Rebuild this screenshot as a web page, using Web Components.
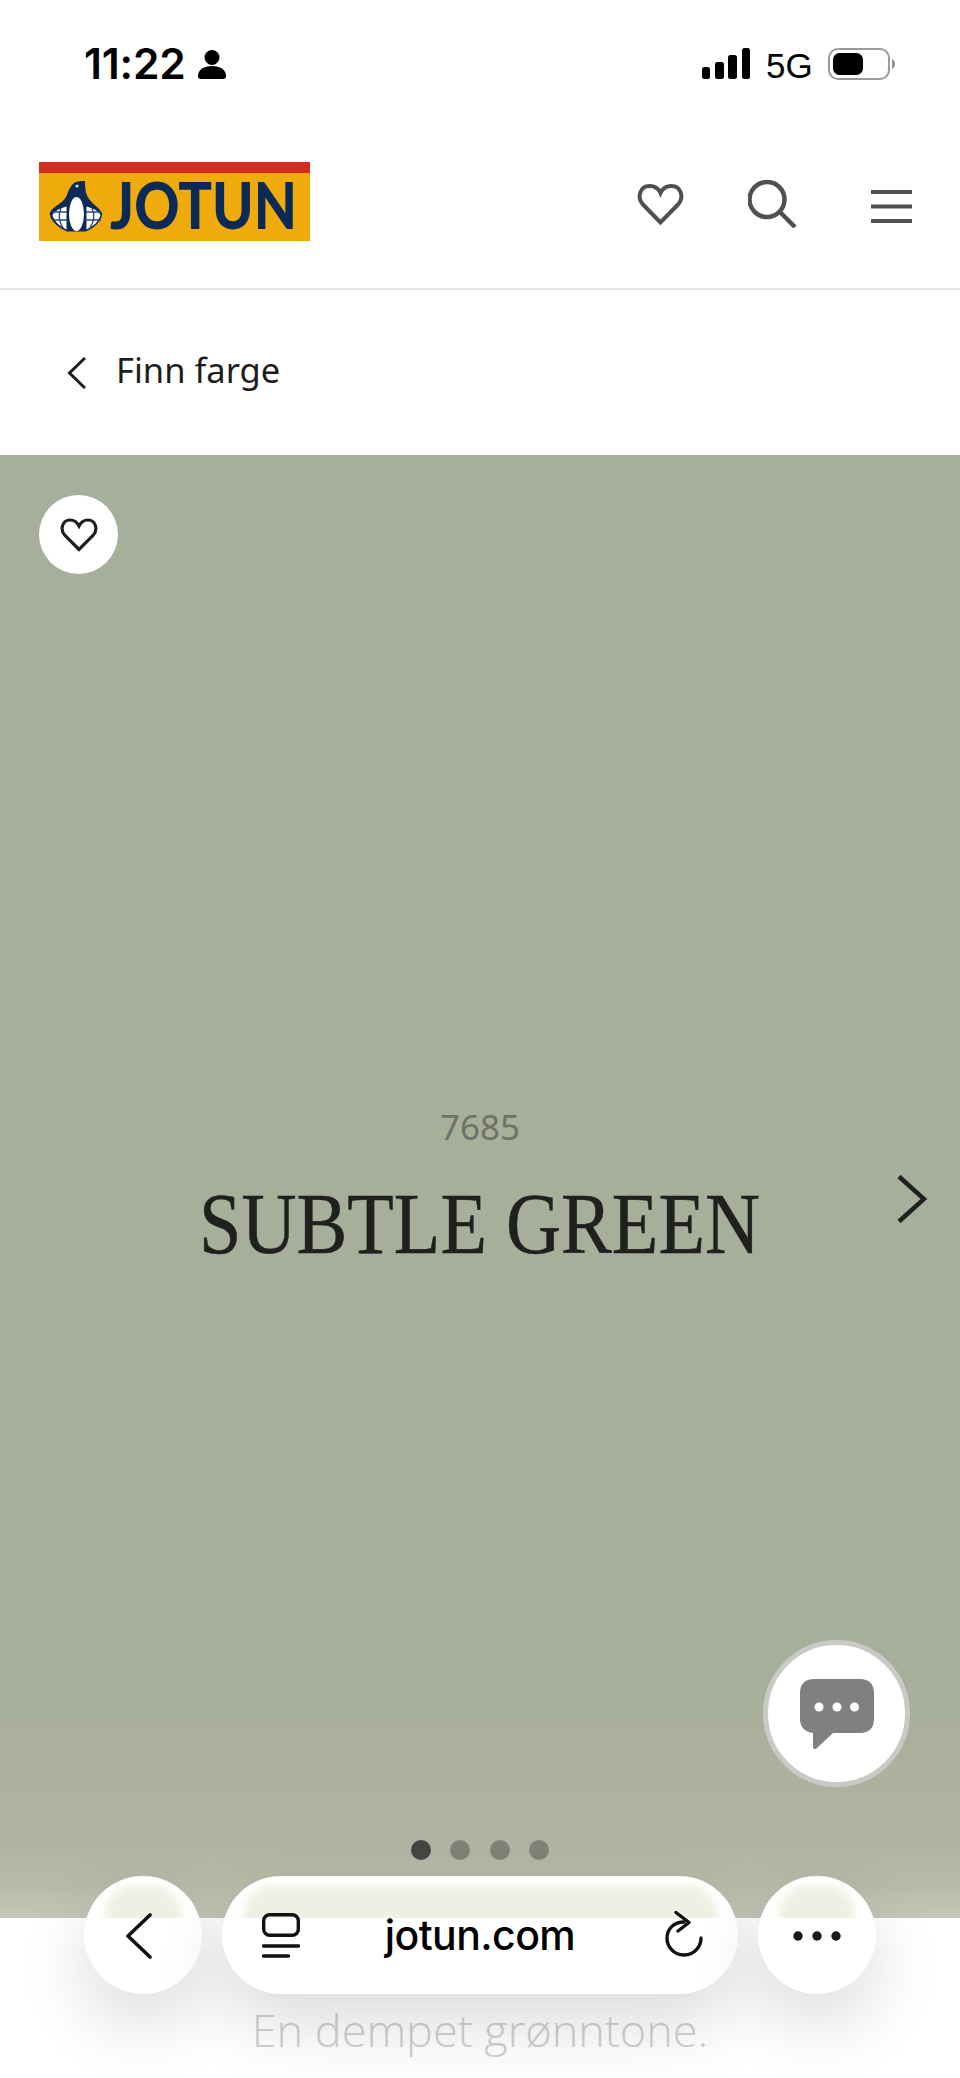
<!DOCTYPE html>
<html lang="no"><head><meta charset="utf-8"><title>Subtle Green</title>
<style>
html,body{margin:0;padding:0;background:#fff}
body{width:960px;height:2078px;overflow:hidden;position:relative;font-family:"Noto Sans","Open Sans",sans-serif}
</style></head><body>
<status-bar></status-bar>
<site-header></site-header>
<back-link>Finn farge</back-link>
<color-hero code="7685" name="SUBTLE GREEN"></color-hero>
<color-note>En dempet grønntone.</color-note>
<chat-fab></chat-fab>
<browser-bar url="jotun.com"></browser-bar>
<script>
function def(name,html){
  customElements.define(name,class extends HTMLElement{
    constructor(){super();this.attachShadow({mode:'open'});}
    connectedCallback(){
      let h=html;
      for(const a of this.getAttributeNames())h=h.split('{{'+a+'}}').join(this.getAttribute(a));
      this.shadowRoot.innerHTML=h;
    }
  });
}
def('status-bar',`<style>
:host{display:flex;height:130px;box-sizing:border-box;padding:0 65px 0 84px;align-items:flex-start;color:#000}
.time{font:600 42.500px/1 Inter,sans-serif;letter-spacing:-.2px;margin-top:43px;width:101px;white-space:nowrap}
.person{margin:50px 0 0 13px}
.sp{flex:1}
.sig{margin-top:48px}
.g{font:400 35px/1 "Liberation Sans",sans-serif;margin:48px 0 0 16px;width:46px}
.bat{margin:48px 0 0 16px}
</style>
<div class="time">11:22</div>
<svg class="person" width="28" height="29" viewBox="0 0 28 29"><circle cx="14" cy="7.500" r="7.500"/><path d="M0 26c0-6.500 6-10 14-10s14 3.500 14 10c0 2-1 3-3 3H3c-2 0-3-1-3-3z"/></svg>
<div class="sp"></div>
<svg class="sig" width="48" height="31" viewBox="0 0 48 31"><rect x="0" y="19" width="8" height="12" rx="2.500"/><rect x="13" y="14" width="9" height="17" rx="2.500"/><rect x="26" y="7" width="9" height="24" rx="2.500"/><rect x="40" y="0" width="8" height="31" rx="2.500"/></svg>
<div class="g">5G</div>
<svg class="bat" width="67" height="32" viewBox="0 0 67 32"><rect x="1" y="1" width="60" height="30" rx="9" fill="none" stroke="#999" stroke-width="2"/><rect x="5" y="5" width="30" height="22" rx="6.500"/><path d="M64 11c2 .8 3 2.800 3 5s-1 4.200-3 5z" fill="#8f8f8f"/></svg>`);

def('jotun-logo',`<style>:host{display:block;width:271px;height:79px}svg{display:block;overflow:visible}</style>
<svg width="271" height="90" viewBox="0 0 271 90">
<rect width="271" height="79" fill="#efaa0b"/><rect width="271" height="11" fill="#d92c20"/>
<path d="M46 19C41 19 37 19 34 22 30 26 29 31 27 35 25 39 20 42 16 45 12 48 10 51 11 53 12 60 20 66 28 69.500L47 69.500C55 66 62 60 63 53 64 51 61 48 58 45 53 41 49 37 47 31 46 26 46 22 46 19Z" fill="#0c2a58"/>
<path d="M13.500 53C16 49 21 46 27.500 44.500L27.500 67.500C20 64 15 59 13.500 53Z" fill="#fff"/>
<path d="M61.500 53C59 49 54 46 47.500 44.500L47.500 67.500C55 64 60 59 61.500 53Z" fill="#fff"/>
<g stroke="#2f4872" stroke-width="1.400" fill="none"><path d="M13 50h15M13 58h15M47 50h15M47 58h15M22 46c-3 7-2 14 2 20M53 46c3 7 2 14-2 20"/></g>
<ellipse cx="37.500" cy="52" rx="7.500" ry="17" fill="#fff"/>
<circle cx="38" cy="24" r="1.600" fill="#cfd8e6"/>
<text x="71" y="67" font-family="Lato,sans-serif" font-weight="900" font-size="64" fill="#0c2a58" textLength="187" lengthAdjust="spacingAndGlyphs">JOTUN</text>
</svg>`);

def('site-header',`<style>
:host{display:flex;height:160px;box-sizing:border-box;padding:32px 48px 0 39px;border-bottom:2px solid #e6e6e6;align-items:flex-start}
.sp{flex:1}svg{display:block;fill:none;stroke:#505050}
</style>
<jotun-logo></jotun-logo><div class="sp"></div>
<svg style="margin-top:21px" width="47" height="43" viewBox="0 0 47 43"><path d="M23.500 39.500 6 21.500C-.5 14.500 3 3 12.500 3c5 0 9 2.500 11 7 2-4.500 6-7 11-7C44 3 47.500 14.500 41 21.500z" stroke-width="4" stroke-linejoin="miter"/></svg>
<svg style="margin:18px 0 0 64px" width="49" height="48" viewBox="0 0 49 48"><circle cx="19" cy="19.500" r="17.500" stroke-width="4.500"/><path d="M31 31l16 16" stroke-width="4.500"/></svg>
<svg style="margin:28px 0 0 74px" width="41" height="33" viewBox="0 0 41 33"><path d="M0 2h41M0 16.500h41M0 31h41" stroke-width="4"/></svg>`);

def('back-link',`<style>
:host{display:flex;height:165px;align-items:center;padding-left:67px;color:#1d1d1b}
svg{display:block;fill:none;stroke:#1d1d1b}
span{font:400 34.500px/1 "Noto Sans",sans-serif;margin-left:30px;position:relative;top:-2px}
</style>
<svg width="19" height="32" viewBox="0 0 19 32"><path d="M18 1 2.500 16 18 31" stroke-width="3"/></svg><span><slot></slot></span>`);

def('fav-button',`<style>
:host{display:flex;width:79px;height:79px;border-radius:50%;background:#fff;align-items:center;justify-content:center}
svg{display:block;fill:none;stroke:#1f1f1d}
</style>
<svg width="38" height="34" viewBox="0 0 38 34"><path d="M19 31.500 5 17.500C-.5 11.500 2.500 2 10 2c4 0 7 2 9 6 2-4 5-6 9-6 7.500 0 10.500 9.500 5 15.500z" stroke-width="3.200"/></svg>`);

def('color-hero',`<style>
:host{display:block;height:1463px;position:relative;box-sizing:border-box;padding:40px 39px 0;
background:linear-gradient(#a7af9b 0,#a7af9b 1230px,#aeb19d 1330px,#afb2a0 1380px,#b8baa9 1430px,#c5c7b9 1463px)}
.txt{position:absolute;inset:654px 0 auto 0;display:flex;flex-direction:column;align-items:center}
.code{font:400 35px/1 "Noto Sans",sans-serif;color:#6e7268}
h1{margin:37px 0 0;font:400 86px/1 "Liberation Serif",serif;color:#20211e;transform:scaleX(.886);white-space:nowrap;-webkit-text-stroke:.5px #20211e}
.next{position:absolute;left:897px;top:720px;fill:none;stroke:#20211e}
.dots{position:absolute;left:411px;top:1385px;display:flex;gap:19.400px}
.dots i{width:20px;height:20px;border-radius:50%;background:#7f8277}
.dots i:first-child{background:#454644}
</style>
<fav-button></fav-button>
<div class="txt"><div class="code">{{code}}</div><h1>{{name}}</h1></div>
<svg class="next" width="30" height="48" viewBox="0 0 30 48"><path d="M2 1.500 27 24 2 46.500" stroke-width="4.500"/></svg>
<div class="dots"><i></i><i></i><i></i><i></i></div>`);

def('color-note',`<style>
:host{display:block;height:160px;background:#fff;text-align:center;font:300 45px/1 "Open Sans",sans-serif;color:#d0d0d0;padding-top:89px;box-sizing:border-box}
</style><slot></slot>`);

def('chat-fab',`<style>
:host{display:flex;position:absolute;left:763px;top:1640px;width:147px;height:147px;box-sizing:border-box;border-radius:50%;background:#fff;border:5px solid #c9cac5;align-items:center;justify-content:center}
svg{display:block;position:relative;top:1px;left:0}
</style>
<svg width="74" height="71" viewBox="0 0 74 71"><path d="M14 0h46c9 0 14 5 14 14v26c0 9-5 14-14 14H33L17 69c-2 2-4 1-4-1V54C5 53 0 48 0 40V14C0 5 5 0 14 0z" fill="#808080"/><circle cx="19" cy="28" r="4.500" fill="#fff"/><circle cx="37" cy="28" r="4.500" fill="#fff"/><circle cx="54.500" cy="28" r="4.500" fill="#fff"/></svg>`);

def('browser-bar',`<style>
:host{display:flex;position:absolute;left:84px;top:1876px;gap:20px;color:#000}
.b{height:118px;border-radius:59px;background:#fff;box-shadow:0 30px 70px rgba(0,0,0,.14);position:relative;display:flex;align-items:center;box-sizing:border-box}
.r{width:118px;justify-content:center}
.p{width:516px}
.glow{position:absolute;left:0;right:0;top:0;height:42px;overflow:hidden;border-radius:59px 59px 0 0}
.glow::before{content:"";position:absolute;left:21px;right:21px;top:9px;height:60px;border-radius:30px;background:#eef0e3;filter:blur(4px)}
.p .glow::before{left:22px;right:21px}
svg{display:block;position:relative;fill:none;stroke:#111}
.u{position:absolute;left:158px;top:35px;font:500 41px/1.2 Inter,"Liberation Sans",sans-serif;letter-spacing:-.6px;width:200px;text-align:center}
.tabs{position:absolute;left:40px;top:37px}
.rel{position:absolute;right:35px;top:35px}
</style>
<div class="b r"><div class="glow"></div><svg width="26" height="46" viewBox="0 0 26 46" style="left:-4px;top:1px"><path d="M24 2 2 23l22 21" stroke-width="3.600" stroke-linecap="round" stroke-linejoin="round"/></svg></div>
<div class="b p"><div class="glow"></div>
<svg class="tabs" width="38" height="46" viewBox="0 0 38 46"><rect x="1.700" y="1.700" width="34.600" height="20.600" rx="6" stroke-width="3.400"/><path d="M1.500 33h35M1.500 43h25" stroke-width="3.400" stroke-linecap="round"/></svg>
<div class="u">{{url}}</div>
<svg class="rel" width="38" height="46" viewBox="0 0 38 46"><path d="M19 11C9 11 2 18 2 27s7 17 17 17 17-8 17-17" stroke-width="3.400" stroke-linecap="round"/><path d="M11 1.500 24 11.500 13 20" stroke-width="3.400" stroke-linecap="round" stroke-linejoin="round"/></svg>
</div>
<div class="b r"><div class="glow"></div><svg width="48" height="10" viewBox="0 0 48 10" style="fill:#1a1a1a;stroke:none;top:1px"><circle cx="5" cy="5" r="4.700"/><circle cx="24" cy="5" r="4.700"/><circle cx="43" cy="5" r="4.700"/></svg></div>`);
</script>
</body></html>
